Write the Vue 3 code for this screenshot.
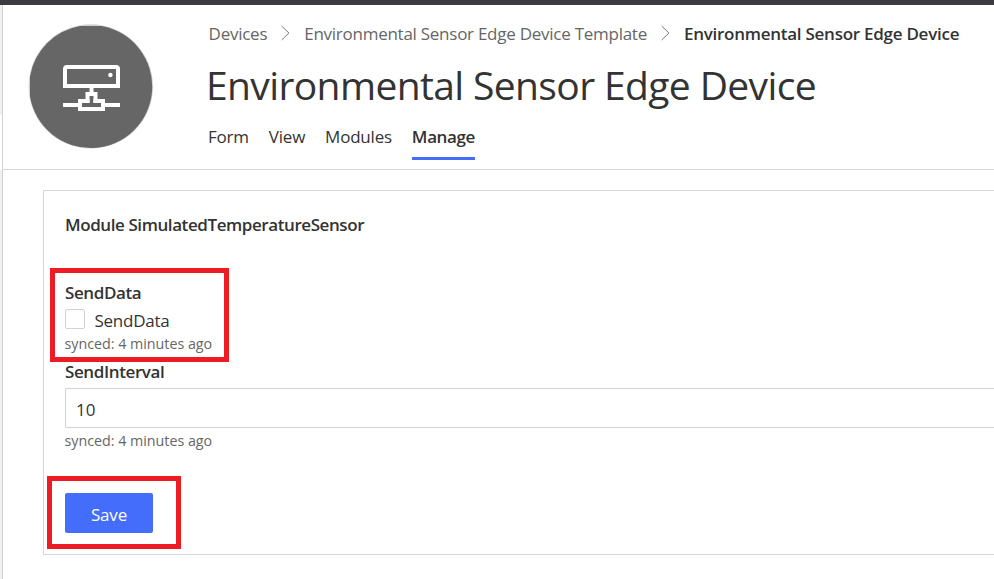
<script setup>
import { ref } from 'vue'

const tabs = [
  { label: 'Form', key: 'form' },
  { label: 'View', key: 'view' },
  { label: 'Modules', key: 'modules' },
  { label: 'Manage', key: 'manage' },
]
const active = ref('manage')
const sendData = ref(false)
const interval = ref('10')
</script>

<template>
  <div class="page">
    <div class="topbar"></div>
    <div class="shell">
      <aside class="rail"><div class="rail-gap"></div></aside>
      <main class="main">
        <header class="header">
          <svg class="avatar" viewBox="28 23 126 127" aria-hidden="true">
            <circle cx="90.8" cy="86.4" r="62.2" fill="#d2d2d2" />
            <path d="M30 76.5A61.5 61.5 0 0 1 80 26H101.6A61.5 61.5 0 1 1 30 96.3z" fill="#666" />
            <path d="M65 86V69q0-2 2-2h49q2 0 2 2v17z" fill="none" stroke="#fff" stroke-width="4" />
            <circle cx="110.4" cy="75" r="2.2" fill="#fff" />
            <path d="M91.5 88v5" stroke="#fff" stroke-width="4" />
            <path d="M63 105h15M105 105h15" stroke="#fff" stroke-width="4" />
            <path d="M87.5 101V94h8v7h7.5v8H80v-8z" fill="none" stroke="#fff" stroke-width="4" />
            <path d="M80 101h9.6M93.4 101h9" stroke="#fff" stroke-width="4" />
          </svg>
          <div class="heading">
            <nav class="crumbs">
              <a class="crumb">Devices</a>
              <svg class="chev" viewBox="0 0 9 16"><path d="M.7 1l7.2 7-7.2 7" /></svg>
              <a class="crumb">Environmental Sensor Edge Device Template</a>
              <svg class="chev" viewBox="0 0 9 16"><path d="M.7 1l7.2 7-7.2 7" /></svg>
              <span class="crumb current">Environmental Sensor Edge Device</span>
            </nav>
            <h1 class="title">Environmental Sensor Edge Device</h1>
            <nav class="tabs">
              <a v-for="t in tabs" :key="t.key" class="tab" :class="[t.key, { active: active === t.key }]" @click="active = t.key">{{ t.label }}</a>
            </nav>
          </div>
        </header>

        <section class="card">
          <h2 class="module">Module SimulatedTemperatureSensor</h2>
          <div class="field highlight send">
            <span class="label">SendData</span>
            <label class="check">
              <input v-model="sendData" type="checkbox" class="box" />
              <span class="check-text">SendData</span>
            </label>
            <span class="synced">synced: 4 minutes ago</span>
          </div>
          <div class="field interval">
            <label class="label" for="interval">SendInterval</label>
            <input id="interval" v-model="interval" class="input" />
            <span class="synced">synced: 4 minutes ago</span>
          </div>
          <div class="highlight actions">
            <button class="save">Save</button>
          </div>
        </section>
      </main>
    </div>
  </div>
</template>

<style>
body { background: #fff; overflow: hidden; }
</style>

<style scoped>
* { box-sizing: border-box; }
.page {
  display: flex;
  flex-direction: column;
  height: 579px;
  overflow: hidden;
  font-family: "Open Sans", "Noto Sans", sans-serif;
  font-size: 17px;
  line-height: 24px;
  color: #333;
}
.topbar { height: 5px; flex: none; background: #3c3b41; }
.shell { display: flex; flex: 1; min-height: 0; }
.rail { width: 3px; flex: none; background: #f0f0f0; border-right: 1px solid #d2d2d2; padding-top: 110px; }
.rail-gap { height: 55px; background: #fff; }
.main { flex: 1; min-width: 0; }
.header {
  display: flex;
  height: 165px;
  padding: 18px 0 0 25px;
  border-bottom: 1px solid #d6d6d6;
}
.avatar { width: 126px; height: 127px; flex: none; }
.heading { padding-left: 54px; white-space: nowrap; }
.crumbs { display: flex; align-items: center; height: 21px; padding-left: .6px; letter-spacing: -.26px; }
.crumb { color: #666; }
.current { color: #333; font-weight: 600; }
.chev { width: 9px; height: 16px; margin: 0 14px; fill: none; stroke: #777; stroke-width: 1; flex: none; position: relative; top: -1px; }
.title { margin: 15px 0 0 -2px; font-size: 39px; line-height: 52px; font-weight: 400; letter-spacing: -.62px; }
.tabs { display: flex; gap: 20px; margin-top: 14px; letter-spacing: -.22px; }
.tab { height: 35px; cursor: pointer; }
.active { font-weight: 600; border-bottom: 3px solid #456dfb; letter-spacing: -.38px; }
.card {
  height: 365px;
  margin: 20px 0 0 40px;
  border: 1px solid #d6d6d6;
  border-right: 0;
  padding: 22px 0 0 6px;
}
.module { margin: 0 0 0 15px; font-size: 17px; line-height: 24px; font-weight: 600; letter-spacing: -.42px; }
.highlight { border: 5px solid #ed1c24; }
.send { width: 179px; height: 94px; margin-top: 31px; padding: 8px 0 0 10px; }
.field { display: flex; flex-direction: column; align-items: flex-start; white-space: nowrap; }
.label { font-weight: 600; line-height: 24px; letter-spacing: -.39px; }
.check { display: flex; height: 30px; align-items: flex-start; padding-top: 4px; letter-spacing: -.25px; }
.box { appearance: none; width: 20px; height: 20px; margin: 0 9.5px 0 0; border: 1px solid #d2d2d2; border-radius: 2px; background: #fff; }
.synced { font-size: 14.3px; line-height: 18px; color: #666; margin-left: -.5px; letter-spacing: -.02px; }
.interval { padding-left: 15px; margin-top: -2px; }
.input {
  width: 100%;
  height: 40px;
  margin: 4px 0;
  padding: 3px 10px 0;
  border: 1px solid #d2d2d2;
  border-right: 0;
  border-radius: 2px 0 0 2px;
  font: inherit;
  color: #333;
  outline: none;
}
.actions { width: 134px; height: 73px; margin: 26px 0 0 -3px; padding: 12px 0 0 13px; }
.save { width: 88px; height: 40px; padding: 3px 0 0; border: 0; border-radius: 2px; background: #456dfb; color: #fff; font: inherit; letter-spacing: -.2px; display: block; }
</style>
